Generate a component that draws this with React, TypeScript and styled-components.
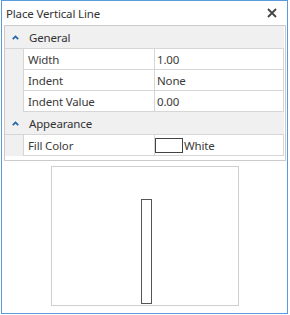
import React from "react";
import styled, { createGlobalStyle } from "styled-components";

const GlobalStyle = createGlobalStyle`
  body {
    margin: 0;
    background: #ffffff;
    font-family: "Noto Sans", "Open Sans", sans-serif;
    font-size: 11.5px;
    letter-spacing: -0.15px;
    color: #3a3a3a;
  }
`;

const Window = styled.div`
  box-sizing: border-box;
  width: 287px;
  height: 314px;
  margin-left: 1px;
  border: 1px solid #5a9bdc;
  display: flex;
  flex-direction: column;
`;

const TitleBar = styled.div`
  height: 24px;
  display: flex;
  align-items: center;
  justify-content: space-between;
  padding: 0 10px 0 4px;
`;

const Title = styled.span`
  color: #333333;
`;

const CloseButton = styled.button`
  border: none;
  background: none;
  padding: 0;
  width: 10px;
  height: 10px;
  display: flex;
  cursor: pointer;
`;

const Grid = styled.div`
  margin: 0 1px 0 2px;
  border: 1px solid #cacaca;
  padding: 0 1px 4px 0;
`;

const GroupHeader = styled.div`
  height: 22px;
  border-bottom: 1px solid #d6d6d6;
  background: #f0f0f0;
  display: flex;
  align-items: center;
  gap: 10px;
  padding-left: 7px;
  color: #333333;
`;

const Row = styled.div`
  display: grid;
  grid-template-columns: 18px 131px 1fr;
  height: 21px;
`;

const Indent = styled.div`
  background: #f0f0f0;
`;

const Cell = styled.div<{ $value?: boolean }>`
  box-sizing: border-box;
  border-left: 1px solid #d6d6d6;
  border-bottom: 1px solid #d6d6d6;
  ${(p) => (p.$value ? "border-right: 1px solid #d6d6d6;" : "")}
  display: flex;
  align-items: center;
  gap: 1px;
  padding-left: ${(p) => (p.$value ? "2px" : "4px")};
  color: #3a3a3a;
  white-space: nowrap;
`;

const Swatch = styled.span<{ $color: string }>`
  box-sizing: border-box;
  width: 28px;
  height: 15px;
  border: 1px solid #444444;
  background: ${(p) => p.$color};
  margin-left: -2px;
`;

const Preview = styled.div`
  box-sizing: border-box;
  align-self: center;
  width: 188px;
  height: 140px;
  margin: 5px 0 0 1px;
  border: 1px solid #cfcfcf;
  display: flex;
  justify-content: center;
  align-items: flex-end;
  padding: 0 0 1px 3px;
`;

const Bar = styled.div`
  box-sizing: border-box;
  width: 11px;
  height: 105px;
  border: 1px solid #555555;
  background: #ffffff;
`;

const Chevron = () => (
  <svg width="7" height="5" viewBox="0 0 7 5">
    <polyline points="0.8,4.2 3.5,1.4 6.2,4.2" fill="none" stroke="#2462a8" strokeWidth="1.7" />
  </svg>
);

const CloseIcon = () => (
  <svg width="10" height="10" viewBox="0 0 10 10">
    <path d="M1 1 L9 9 M9 1 L1 9" stroke="#444444" strokeWidth="1.8" />
  </svg>
);

type Prop = { label: string; value: string; swatch?: string };
type Group = { name: string; props: Prop[] };

const groups: Group[] = [
  {
    name: "General",
    props: [
      { label: "Width", value: "1.00" },
      { label: "Indent", value: "None" },
      { label: "Indent Value", value: "0.00" },
    ],
  },
  {
    name: "Appearance",
    props: [{ label: "Fill Color", value: "White", swatch: "#ffffff" }],
  },
];

export default function App() {
  return (
    <>
      <GlobalStyle />
      <Window>
        <TitleBar>
          <Title>Place Vertical Line</Title>
          <CloseButton>
            <CloseIcon />
          </CloseButton>
        </TitleBar>
        <Grid>
          {groups.map((g) => (
            <React.Fragment key={g.name}>
              <GroupHeader>
                <Chevron />
                {g.name}
              </GroupHeader>
              {g.props.map((p) => (
                <Row key={p.label}>
                  <Indent />
                  <Cell>{p.label}</Cell>
                  <Cell $value>
                    {p.swatch && <Swatch $color={p.swatch} />}
                    {p.value}
                  </Cell>
                </Row>
              ))}
            </React.Fragment>
          ))}
        </Grid>
        <Preview>
          <Bar />
        </Preview>
      </Window>
    </>
  );
}
